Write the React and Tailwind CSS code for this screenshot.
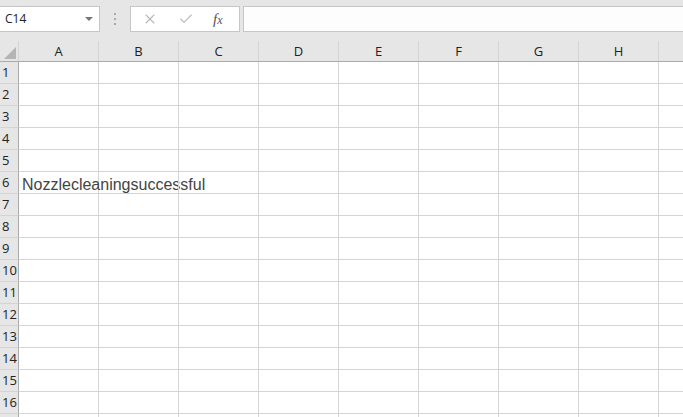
import { X, Check } from "lucide-react";

const cols = ["A", "B", "C", "D", "E", "F", "G", "H", ""];
const rows = Array.from({ length: 16 }, (_, i) => i + 1);

const App = () => {
  return (
    <div className="w-[683px] h-[417px] overflow-hidden bg-white font-['Open_Sans',sans-serif] select-none">
      {/* Formula bar */}
      <div className="h-[41px] bg-[#e6e6e6] flex items-start pt-[6px]">
        <div className="w-[100px] h-[26px] bg-white border border-l-0 border-[#c6c6c6] flex items-center justify-between pl-[5px] pr-[6px]">
          <span className="text-[12px] text-[#222]">C14</span>
          <span className="w-0 h-0 border-l-[4px] border-r-[4px] border-t-[4px] border-l-transparent border-r-transparent border-t-[#777]" />
        </div>
        <div className="w-[30px] h-[26px] flex flex-col items-center justify-center gap-[3px]">
          <span className="w-[2px] h-[2px] bg-[#aaa]" />
          <span className="w-[2px] h-[2px] bg-[#aaa]" />
          <span className="w-[2px] h-[2px] bg-[#aaa]" />
        </div>
        <div className="w-[110px] h-[26px] bg-white border border-[#c6c6c6] flex items-center">
          <X className="ml-[11px] w-[16px] h-[16px] text-[#b8b8b8]" strokeWidth={1.6} />
          <Check className="ml-[20px] w-[16px] h-[16px] text-[#b8b8b8]" strokeWidth={1.6} />
          <span className="ml-[19px] text-[15px] italic text-[#555] font-['Liberation_Serif',serif] leading-none">
            f<span className="text-[12px]">x</span>
          </span>
        </div>
        <div className="ml-[3px] flex-1 h-[26px] bg-[#fdfdfd] border border-r-0 border-[#c6c6c6]" />
      </div>

      {/* Column headers */}
      <div className="flex h-[21px] bg-[#e6e6e6] border-b border-[#ababab]">
        <div className="w-[19px] shrink-0 border-r border-[#d4d4d4] flex items-end justify-end pr-[2px] pb-[2px]">
          <svg width="12" height="12" viewBox="0 0 12 12">
            <polygon points="12,0 12,12 0,12" fill="#b4b4b4" />
          </svg>
        </div>
        {cols.map((c, i) => (
          <div
            key={i}
            className="w-[80px] shrink-0 border-r border-[#d4d4d4] flex items-center justify-center text-[13px] text-[#222] pt-[1px]"
          >
            {c}
          </div>
        ))}
      </div>

      {/* Grid rows */}
      {rows.map((r) => (
        <div key={r} className="flex h-[22px]">
          <div className="w-[19px] shrink-0 bg-[#e6e6e6] border-r border-b border-r-[#ababab] border-b-[#d4d4d4] flex items-center pl-[2px] text-[13px] text-[#222]">
            {r}
          </div>
          {cols.map((c, i) => (
            <div
              key={i}
              className="w-[80px] shrink-0 border-r border-b border-[#d4d4d4] relative"
            >
              {r === 6 && i === 0 && (
                <span className="absolute left-[3px] top-[1px] whitespace-nowrap text-[16px] text-[#444] font-['Liberation_Sans',Arial,sans-serif]">
                  Nozzlecleaningsuccessful
                </span>
              )}
            </div>
          ))}
        </div>
      ))}
      <div className="flex h-[22px]">
        <div className="w-[19px] shrink-0 bg-[#e6e6e6] border-r border-[#ababab]" />
        {cols.map((c, i) => (
          <div key={i} className="w-[80px] shrink-0 border-r border-[#d4d4d4]" />
        ))}
      </div>
    </div>
  );
};

export default App;
